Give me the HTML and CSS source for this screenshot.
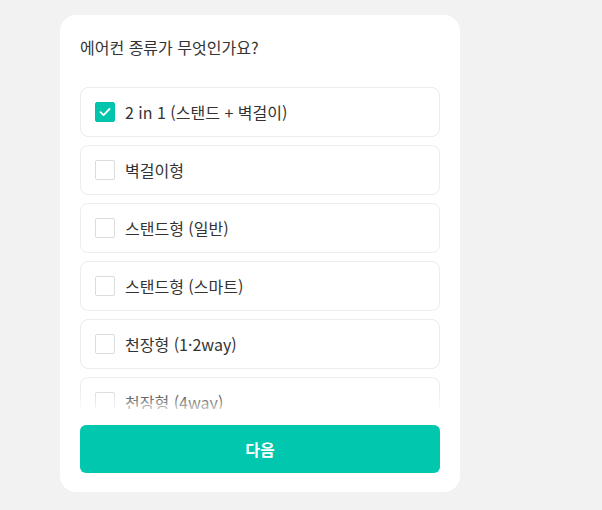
FILE: index.html
```html
<!DOCTYPE html>
<html lang="ko">
<head>
<meta charset="utf-8">
<link rel="stylesheet" href="styles.css">
</head>
<body>
<div class="card">
  <h1 class="title">에어컨 종류가 무엇인가요?</h1>
  <div class="list-wrap">
    <ul class="list">
      <li class="option checked"><span class="box"><svg viewBox="0 0 20 20" width="20" height="20"><path d="M5.5 10.2l3 3 6-6.2" fill="none" stroke="#fff" stroke-width="1.8" stroke-linecap="round" stroke-linejoin="round"/></svg></span><span class="label">2 in 1 (스탠드 + 벽걸이)</span></li>
      <li class="option"><span class="box"></span><span class="label">벽걸이형</span></li>
      <li class="option"><span class="box"></span><span class="label">스탠드형 (일반)</span></li>
      <li class="option"><span class="box"></span><span class="label">스탠드형 (스마트)</span></li>
      <li class="option"><span class="box"></span><span class="label">천장형 (1·2way)</span></li>
      <li class="option"><span class="box"></span><span class="label">천장형 (4way)</span></li>
    </ul>
    <div class="fade"></div>
  </div>
  <button class="next">다음</button>
</div>
</body>
</html>
```
FILE: styles.css
```css
html, body {
  margin: 0;
  padding: 0;
  background: #f2f2f2;
  font-family: "Noto Sans CJK KR", "Noto Sans", sans-serif;
}
body {
  padding: 15px 0 0 60px;
}
.card {
  width: 400px;
  height: 477px;
  box-sizing: border-box;
  background: #fff;
  border-radius: 16px;
  padding: 20px 20px 19px;
  display: flex;
  flex-direction: column;
}
.title {
  margin: 0;
  font-size: 16px;
  font-weight: 400;
  line-height: 24px;
  color: #333;
}
.list-wrap {
  position: relative;
  margin-top: 28px;
  height: 322px;
  overflow: hidden;
}
.list {
  list-style: none;
  margin: 0;
  padding: 0;
  display: flex;
  flex-direction: column;
  gap: 8px;
}
.option {
  height: 50px;
  box-sizing: border-box;
  border: 1px solid #ececec;
  border-radius: 8px;
  padding: 0 14px;
  display: flex;
  align-items: center;
  gap: 10px;
  font-size: 16px;
  color: #333;
}
.box {
  width: 20px;
  height: 20px;
  box-sizing: border-box;
  border: 1px solid #dcdcdc;
  border-radius: 2px;
  flex: none;
  display: flex;
}
.checked .box {
  background: #00c4ab;
  border-color: #00c4ab;
}
.checked .box svg {
  margin: -1px;
}
.label {
  line-height: 24px;
}
.fade {
  position: absolute;
  left: 0;
  right: 0;
  bottom: 0;
  height: 18px;
  background: linear-gradient(to bottom, rgba(255,255,255,0), rgba(255,255,255,0.7));
}
.next {
  margin-top: 16px;
  height: 48px;
  border: none;
  border-radius: 6px;
  background: #00c7ae;
  color: #fff;
  font-family: inherit;
  font-size: 16px;
  font-weight: 700;
}
```
